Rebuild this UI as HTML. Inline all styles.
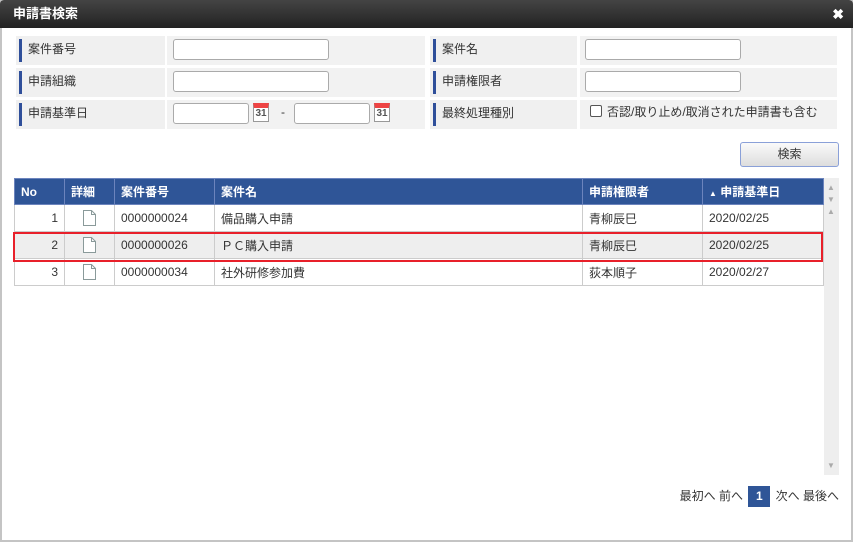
<!DOCTYPE html>
<html><head><meta charset="utf-8"><style>
*{box-sizing:border-box;margin:0;padding:0}
body{width:853px;height:542px;background:#fff;font-family:"Liberation Sans","Noto Sans CJK JP",sans-serif;font-size:12px;color:#333;position:relative;overflow:hidden}
.frame{position:absolute;left:0;top:0;width:853px;height:542px;border:2px solid #c4c4c4;border-top:none}
.title{position:absolute;left:0;top:0;width:853px;height:28px;background:linear-gradient(#444,#222);border-radius:4px 4px 0 0;color:#fff;font-weight:bold;font-size:13px;line-height:28px;padding-left:13px}
.x{position:absolute;right:9px;top:0;color:#fff;font-size:14px;font-weight:bold}
.lab{position:absolute;background:#f0f0f0;height:29px;line-height:26px;padding-left:12px;font-size:12px;color:#333}
.lab:before{content:"";position:absolute;left:3px;top:3px;width:3px;height:23px;background:#2f4f9a}
.val{position:absolute;background:#f2f2f2;height:29px}
.inp{position:absolute;background:#fff;border:1px solid #aaa;border-radius:3px;height:21px}
.cal{position:absolute;width:16px;height:19px;border:1px solid #999;border-top:5px solid #e44;background:#fff;font-size:10px;line-height:12px;text-align:center;color:#555;font-weight:bold}
table{position:absolute;left:14px;top:178px;border-collapse:collapse;width:809px;table-layout:fixed}
th{background:#2f5597;color:#fff;font-weight:bold;text-align:left;height:26px;padding-left:6px;border:1px solid #6c84bd;font-size:12px}
td{height:27px;border:1px solid #ccc;padding-left:6px;font-size:12px}
.doc{display:inline-block;vertical-align:middle;margin-left:12px}
</style></head><body>
<div class="frame"></div>
<div class="title">申請書検索<span class="x">✖</span></div>
<div class="lab" style="left:16px;top:36px;width:149px">案件番号</div>
<div class="val" style="left:167px;top:36px;width:258px"></div>
<div class="lab" style="left:430px;top:36px;width:147px">案件名</div>
<div class="val" style="left:580px;top:36px;width:257px"></div>
<div class="lab" style="left:16px;top:68px;width:149px">申請組織</div>
<div class="val" style="left:167px;top:68px;width:258px"></div>
<div class="lab" style="left:430px;top:68px;width:147px">申請権限者</div>
<div class="val" style="left:580px;top:68px;width:257px"></div>
<div class="lab" style="left:16px;top:100px;width:149px">申請基準日</div>
<div class="val" style="left:167px;top:100px;width:258px"></div>
<div class="lab" style="left:430px;top:100px;width:147px">最終処理種別</div>
<div class="val" style="left:580px;top:100px;width:257px"></div>
<div class="inp" style="left:173px;top:39px;width:156px"></div>
<div class="inp" style="left:585px;top:39px;width:156px"></div>
<div class="inp" style="left:173px;top:71px;width:156px"></div>
<div class="inp" style="left:585px;top:71px;width:156px"></div>
<div class="inp" style="left:173px;top:103px;width:76px"></div>
<div class="cal" style="left:253px;top:103px">31</div>
<div style="position:absolute;left:281px;top:105px">-</div>
<div class="inp" style="left:294px;top:103px;width:76px"></div>
<div class="cal" style="left:374px;top:103px">31</div>
<div style="position:absolute;left:590px;top:105px;width:12px;height:12px;border:1px solid #555;border-radius:2px;background:#fff"></div>
<div style="position:absolute;left:607px;top:103px;font-size:12px">否認/取り止め/取消された申請書も含む</div>
<div style="position:absolute;left:740px;top:142px;width:99px;height:25px;border:1px solid #8aa0d8;border-radius:3px;background:linear-gradient(#fafafa,#ddd);text-align:center;line-height:23px">検索</div>
<div style="position:absolute;left:824px;top:178px;width:15px;height:297px;background:#eee"></div>
<div style="position:absolute;left:827px;top:182px;color:#aaa;font-size:8px;line-height:12px">▲<br>▼<br>▲</div>
<div style="position:absolute;left:827px;top:461px;color:#aaa;font-size:8px">▼</div>
<table>
<colgroup><col style="width:50px"><col style="width:50px"><col style="width:100px"><col style="width:368px"><col style="width:120px"><col style="width:121px"></colgroup>
<tr><th>No</th><th>詳細</th><th>案件番号</th><th>案件名</th><th>申請権限者</th><th><span style="font-size:8px">▲</span> 申請基準日</th></tr>
<tr><td style="text-align:right;padding-right:6px">1</td><td><svg class="doc" width="13" height="16"><path d="M.5 .5H8.5L12.5 4.5V15.5H.5Z" fill="#fff" stroke="#8a9a9a"/><path d="M8.5 .5V4.5H12.5" fill="none" stroke="#8a9a9a"/></svg></td><td>0000000024</td><td>備品購入申請</td><td>青柳辰巳</td><td>2020/02/25</td></tr>
<tr style="background:#eee"><td style="text-align:right;padding-right:6px">2</td><td><svg class="doc" width="13" height="16"><path d="M.5 .5H8.5L12.5 4.5V15.5H.5Z" fill="#fff" stroke="#8a9a9a"/><path d="M8.5 .5V4.5H12.5" fill="none" stroke="#8a9a9a"/></svg></td><td>0000000026</td><td>ＰＣ購入申請</td><td>青柳辰巳</td><td>2020/02/25</td></tr>
<tr><td style="text-align:right;padding-right:6px">3</td><td><svg class="doc" width="13" height="16"><path d="M.5 .5H8.5L12.5 4.5V15.5H.5Z" fill="#fff" stroke="#8a9a9a"/><path d="M8.5 .5V4.5H12.5" fill="none" stroke="#8a9a9a"/></svg></td><td>0000000034</td><td>社外研修参加費</td><td>荻本順子</td><td>2020/02/27</td></tr>
</table>
<div style="position:absolute;left:13px;top:232px;width:810px;height:30px;border:2px solid #e8202a"></div>
<div style="position:absolute;right:14px;top:486px;font-size:12px;line-height:18px">最初へ 前へ <span style="display:inline-block;width:22px;height:21px;background:#2f5597;color:#fff;font-weight:bold;text-align:center;line-height:21px;margin:0 2px">1</span> 次へ 最後へ</div>
</body></html>
